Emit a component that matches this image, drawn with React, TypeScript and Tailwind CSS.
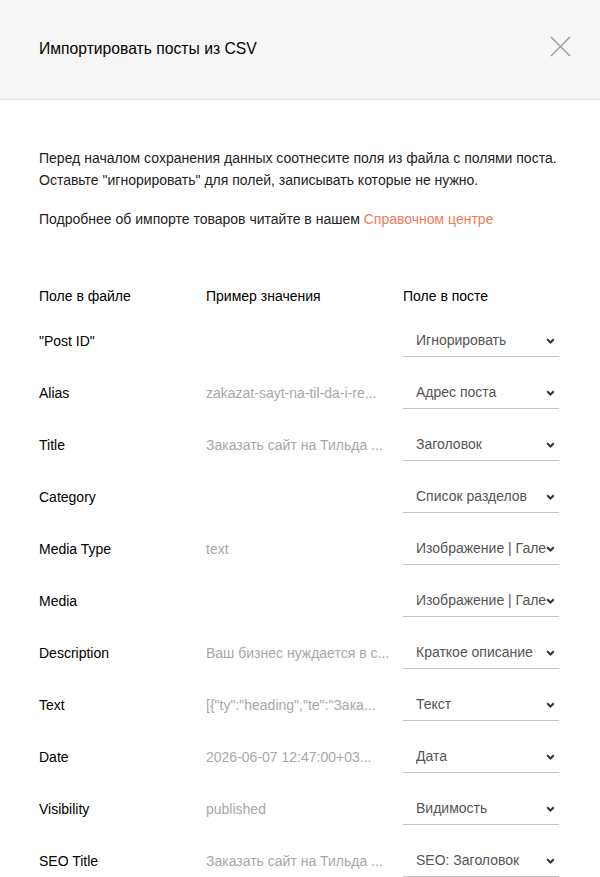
import { useState } from "react";

type Row = { field: string; sample: string; target: string };

const rows: Row[] = [
  { field: '"Post ID"', sample: "", target: "Игнорировать" },
  { field: "Alias", sample: "zakazat-sayt-na-til-da-i-re...", target: "Адрес поста" },
  { field: "Title", sample: "Заказать сайт на Тильда ...", target: "Заголовок" },
  { field: "Category", sample: "", target: "Список разделов" },
  { field: "Media Type", sample: "text", target: "Изображение | Галерея | Видео" },
  { field: "Media", sample: "", target: "Изображение | Галерея | Видео" },
  { field: "Description", sample: "Ваш бизнес нуждается в с...", target: "Краткое описание" },
  { field: "Text", sample: '[{"ty":"heading","te":"Зака...', target: "Текст" },
  { field: "Date", sample: "2026-06-07 12:47:00+03...", target: "Дата" },
  { field: "Visibility", sample: "published", target: "Видимость" },
  { field: "SEO Title", sample: "Заказать сайт на Тильда ...", target: "SEO: Заголовок" },
];

const options = [
  "Игнорировать",
  "Адрес поста",
  "Заголовок",
  "Список разделов",
  "Изображение | Галерея | Видео",
  "Краткое описание",
  "Текст",
  "Дата",
  "Видимость",
  "SEO: Заголовок",
];

function FieldSelect({ initial }: { initial: string }) {
  const [value, setValue] = useState(initial);
  return (
    <div className="relative w-[156px]">
      <select
        value={value}
        onChange={(e) => setValue(e.target.value)}
        className="w-full h-[32px] appearance-none bg-transparent border-0 border-b border-[#c4c4c4] pl-[13px] pr-[12px] text-[14px] text-[#555] outline-none"
      >
        {options.map((o) => (
          <option key={o} value={o}>
            {o}
          </option>
        ))}
      </select>
      <svg
        className="pointer-events-none absolute right-[4px] top-[13px]"
        width="9"
        height="6"
        viewBox="0 0 9 6"
        fill="none"
      >
        <path d="M1.2 1.2 L4.5 4.5 L7.8 1.2" stroke="#333" strokeWidth="2" />
      </svg>
    </div>
  );
}

export default function App() {
  return (
    <div className="w-[600px] min-h-[877px] bg-white font-['Liberation_Sans',Arial,sans-serif] text-[#222]">
      {/* шапка */}
      <div className="h-[100px] bg-[#f6f6f6] border-b border-[#e4e4e4] flex items-center justify-between pl-[39px] pr-[29px]">
        <h1 className="text-[15.7px] text-black -mt-[2px]">Импортировать посты из CSV</h1>
        <button className="w-[22px] h-[22px] flex items-center justify-center -mt-[6px]">
          <svg width="21" height="21" viewBox="0 0 21 21" fill="none">
            <path d="M1 1 L20 20 M20 1 L1 20" stroke="#9a9a9a" strokeWidth="1.3" />
          </svg>
        </button>
      </div>

      {/* описание */}
      <div className="px-[39px] pt-[47px] text-[14px] leading-[22px] text-[#222]">
        <p>Перед началом сохранения данных соотнесите поля из файла с полями поста.</p>
        <p>Оставьте "игнорировать" для полей, записывать которые не нужно.</p>
        <p className="mt-[17px]">
          Подробнее об импорте товаров читайте в нашем{" "}
          <a href="#" className="text-[#f47a5c]">
            Справочном центре
          </a>
        </p>
      </div>

      {/* таблица */}
      <div className="px-[39px] pt-[56px]">
        <div className="grid grid-cols-[167px_197px_156px] text-[14px] text-black h-[20px] items-center">
          <div>Поле в файле</div>
          <div>Пример значения</div>
          <div>Поле в посте</div>
        </div>
        <div className="mt-[19px] flex flex-col gap-[20px]">
          {rows.map((r) => (
            <div key={r.field} className="grid grid-cols-[167px_197px_156px] items-center text-[14px] h-[32px]">
              <div className="text-black">{r.field}</div>
              <div className="text-[#a8a8a8] whitespace-nowrap overflow-hidden">{r.sample}</div>
              <FieldSelect initial={r.target} />
            </div>
          ))}
        </div>
      </div>
    </div>
  );
}
